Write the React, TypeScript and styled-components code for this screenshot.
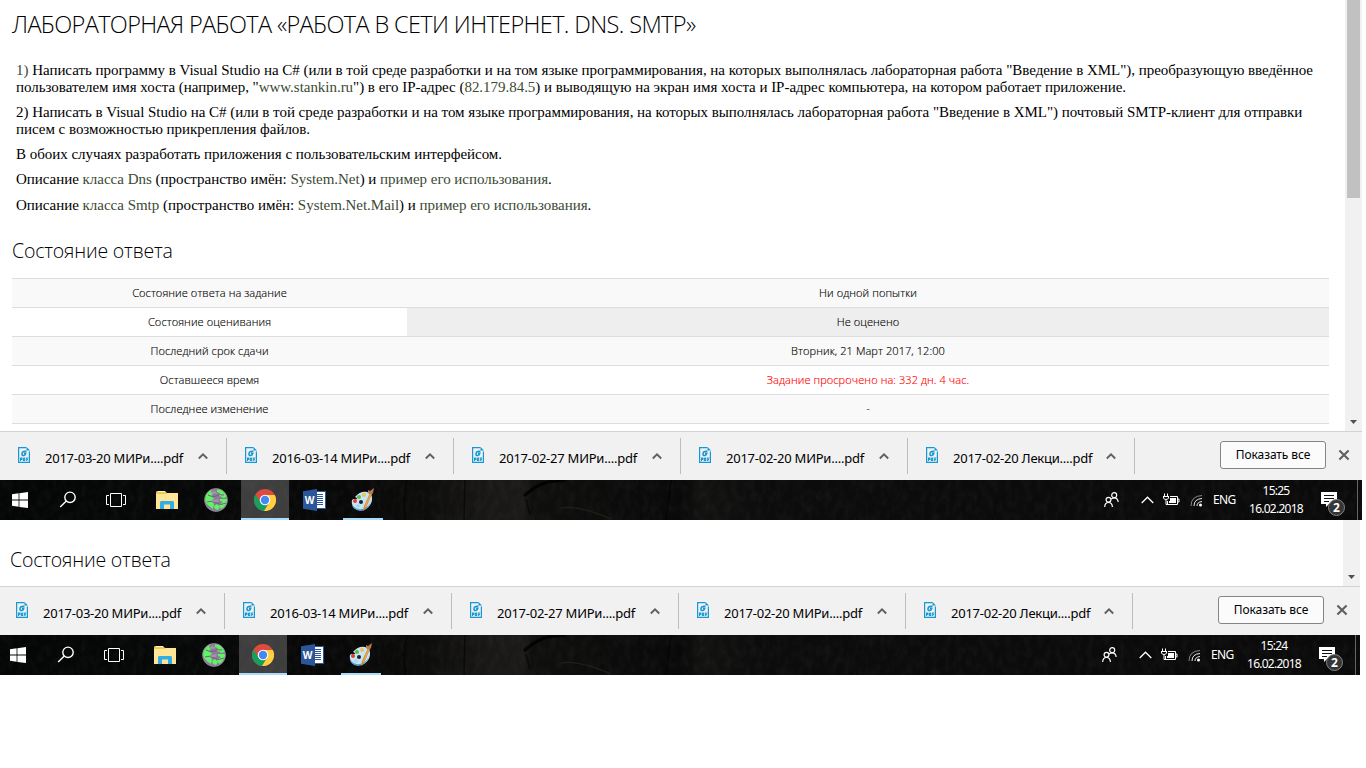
import React from "react";
import styled, { createGlobalStyle } from "styled-components";

const Global = createGlobalStyle`
  * { box-sizing: border-box; }
  html, body { margin: 0; background: #fff; }
  body { width: 1366px; height: 768px; overflow: hidden; }
`;

const Screen = styled.section<{ $w: number; $h: number }>`
  width: ${(p) => p.$w}px;
  height: ${(p) => p.$h}px;
  overflow: hidden;
  display: flex;
  flex-direction: column;
  background: #fff;
`;
const Viewport = styled.div<{ $h: number }>`
  height: ${(p) => p.$h}px;
  display: flex;
  overflow: hidden;
`;
const Article = styled.main<{ $left: number }>`
  flex: 1;
  min-width: 0;
  padding-left: ${(p) => p.$left}px;
  font-family: "Open Sans", sans-serif;
  font-weight: 300;
  color: #000;
`;
const Title = styled.h1`
  margin: 6px 0 0;
  height: 37px;
  font-size: 23.5px;
  line-height: 36px;
  font-weight: 300;
  letter-spacing: -0.63px;
  white-space: nowrap;
`;
const Prose = styled.div`
  padding: 19px 0 0 4px;
  font: 400 15px/17px "Liberation Serif", serif;
`;
const Para = styled.p<{ $gap?: number }>`
  margin: 0 0 ${(p) => p.$gap ?? 8}px;
`;
const Line = styled.span`
  display: block;
  white-space: nowrap;
  letter-spacing: -0.032px;
`;
const Num = styled.span`
  color: #444;
`;
const Link = styled.a`
  color: #3c4a34;
`;
const Heading = styled.h2<{ $top: number }>`
  margin: ${(p) => p.$top}px 0 0;
  height: 30px;
  font-size: 19.5px;
  line-height: 30px;
  font-weight: 300;
  letter-spacing: -0.18px;
  white-space: nowrap;
`;
const Table = styled.div`
  width: 1317px;
  margin-top: 12px;
  border-bottom: 1px solid #ddd;
`;
const Row = styled.div<{ $odd: boolean }>`
  display: grid;
  grid-template-columns: 395px 1fr;
  height: 29px;
  border-top: 1px solid #ddd;
  background: ${(p) => (p.$odd ? "#f9f9f9" : "#fff")};
`;
const Cell = styled.div<{ $red?: boolean; $hover?: boolean }>`
  text-align: center;
  font-size: 11px;
  line-height: 28px;
  letter-spacing: 0.08px;
  -webkit-text-stroke: 0.15px;
  color: ${(p) => (p.$red ? "#f00" : "#000")};
  background: ${(p) => (p.$hover ? "#eee" : "transparent")};
`;
const Scrollbar = styled.div`
  width: 17px;
  background: #f1f1f1;
  display: flex;
  flex-direction: column;
  align-items: center;
  justify-content: space-between;
`;
const Thumb = styled.div<{ $h: number }>`
  width: 13px;
  height: ${(p) => p.$h}px;
  background: #c1c1c1;
`;
const Shelf = styled.div<{ $left: number }>`
  height: 49px;
  flex: none;
  display: flex;
  padding-left: ${(p) => p.$left}px;
  background: #f1f1f1;
  border-top: 1px solid #d3d3d3;
`;
const Download = styled.div<{ $first: boolean }>`
  width: ${(p) => (p.$first ? 210 : 227)}px;
  padding-left: ${(p) => (p.$first ? 0 : 17)}px;
  height: 36px;
  margin-top: 6px;
  display: flex;
  border-right: 1px solid #bdbdbd;
  font: 400 13px/20px "Noto Sans", sans-serif;
  color: #000;
  white-space: nowrap;
`;
const FileIcon = styled.svg`
  width: 14px;
  height: 17px;
  margin-top: 8px;
  flex: none;
`;
const FileName = styled.span`
  width: 140px;
  margin: 10px 0 0 14px;
  letter-spacing: -0.24px;
`;
const Caret = styled.svg`
  margin: 14px 0 0 13px;
  flex: none;
`;
const ShowAll = styled.button`
  width: 106px;
  height: 28px;
  margin: 9px 12px 0 auto;
  padding: 0;
  border: 1px solid #858585;
  border-radius: 3px;
  background: #fbfbfb;
  font: 400 12px/24px "Noto Sans", sans-serif;
  letter-spacing: -0.1px;
  color: #000;
`;
const CloseIcon = styled.svg`
  margin: 17px 12px 0 0;
`;
const Taskbar = styled.div`
  height: 40px;
  flex: none;
  display: grid;
  background: #0a0a0a;
  color: #fff;
  overflow: hidden;
  > * { grid-area: 1 / 1; }
`;
const Items = styled.div<{ $left: number }>`
  display: flex;
  height: 40px;
  margin-left: ${(p) => p.$left}px;
  width: 1362px;
`;
const TaskButton = styled.div<{ $w?: number; $active?: boolean; $ml?: number }>`
  width: ${(p) => p.$w ?? 48}px;
  height: 40px;
  margin-left: ${(p) => p.$ml ?? 0}px;
  flex: none;
  display: flex;
  align-items: center;
  justify-content: center;
  background: ${(p) => (p.$active ? "rgba(255,255,255,.22)" : "transparent")};
`;
const Running = styled(TaskButton)`
  border-bottom: 2px solid #a9dcfa;
  padding-top: 2px;
`;
const Tray = styled.div`
  display: flex;
  margin-left: auto;
  height: 40px;
`;
const TrayIcon = styled.svg<{ $ml?: number; $mt: number }>`
  flex: none;
  margin: ${(p) => p.$mt}px 0 0 ${(p) => p.$ml ?? 0}px;
`;
const Lang = styled.span`
  width: 26px;
  margin-left: 9px;
  font: 400 12px/40px "Noto Sans", sans-serif;
  letter-spacing: -0.6px;
`;
const Clock = styled.div`
  width: 60px;
  margin-left: 7px;
  padding-top: 2px;
  text-align: center;
  font: 400 12px/18px "Noto Sans", sans-serif;
  letter-spacing: -0.75px;
  white-space: nowrap;
`;
const Peek = styled.div`
  width: 5px;
  margin-left: 11px;
  border-left: 1px solid #666;
`;

function Wallpaper({ id }: { id: string }) {
  return (
    <svg width="1362" height="40">
      <defs>
        <linearGradient id={`${id}g`}>
          <stop offset="0" stopColor="#040505" />
          <stop offset=".09" stopColor="#060707" />
          <stop offset=".25" stopColor="#080808" />
          <stop offset=".31" stopColor="#0c0c0b" />
          <stop offset=".36" stopColor="#191817" />
          <stop offset=".385" stopColor="#1a1918" />
          <stop offset=".39" stopColor="#0f0f0e" />
          <stop offset=".5" stopColor="#090909" />
          <stop offset=".515" stopColor="#121211" />
          <stop offset=".56" stopColor="#0c0c0c" />
          <stop offset="1" stopColor="#0b0a0a" />
        </linearGradient>
        <filter id={`${id}n`} x="0" y="0" width="100%" height="100%">
          <feTurbulence type="fractalNoise" baseFrequency=".16 .09" numOctaves="4" seed="8" />
          <feColorMatrix values="0 0 0 0 .45  0 0 0 0 .44  0 0 0 0 .42  .5 0 0 0 -.18" />
        </filter>
      </defs>
      <rect width="1362" height="40" fill={`url(#${id}g)`} />
      <rect width="1362" height="40" filter={`url(#${id}n)`} opacity=".2" />
      <path d="M524 16Q536 5 548 2L566 0" fill="none" stroke="#000" strokeWidth="3" opacity=".8" />
      <path d="M526 19L530 35M407 0Q402 20 406 40M671 0L666 40M465 0L464 40" fill="none" stroke="#000" strokeWidth="1.5" opacity=".55" />
      <path d="M561 28Q578 25 611 39" fill="none" stroke="#231f1a" strokeWidth="1.3" />
    </svg>
  );
}

const WindowsLogo = () => (
  <svg width="16" height="16" viewBox="0 0 16 16" fill="#fff">
    <path d="M0 2.3L6.6 1.3V7.6H0zM7.4 1.2L16 0V7.6H7.4zM0 8.4H6.6V14.7L0 13.8zM7.4 8.4H16V16L7.4 14.9z" />
  </svg>
);
const SearchIcon = () => (
  <svg width="18" height="18" viewBox="0 0 18 18" fill="none" stroke="#fff" strokeWidth="1.4">
    <circle cx="11" cy="6.3" r="5.2" />
    <path d="M7.3 10L1.2 16.1" />
  </svg>
);
const TaskView = () => (
  <svg width="20" height="14" viewBox="0 0 20 14" fill="none" stroke="#fff">
    <path d="M4.5 .5H15.5V13.5H4.5zM3 2.5H.5V11.5H3M17 2.5H19.5V11.5H17" />
  </svg>
);
const Explorer = () => (
  <svg width="22" height="20" viewBox="0 0 22 20">
    <path d="M0 2V19H22V3H11L9 1H1Z" fill="#f3c755" />
    <path d="M0 4H10L12 3H22V19H0Z" fill="#ffe697" />
    <path d="M2 1.5H9" stroke="#fff5cf" />
    <path d="M4 12L5 11H17L18 12V19H14V14.5H8V19H4Z" fill="#33ade5" />
  </svg>
);
const Globe = () => (
  <svg width="24" height="24" viewBox="0 0 24 24">
    <circle cx="12" cy="12" r="11.7" fill="#8b7c98" />
    <path d="M1 9L4 4L8 1L7 4L9 6L7 8L10 10L8 13L10 16L9 21L5 18L2 15L1 12ZM13 1L18 2L21 5L23 9L19 10L18 9L15 8L16 5L13 4ZM16 11L23 11L23 14L20 19L17 21L15 17L19 14L16 13ZM10 18L13 16L16 19L14 22L11 21Z" fill="#62f268" />
    <path d="M4 7Q9 10 12 8T20 7M3 14Q7 12 12 15T22 15" fill="none" stroke="#75637d" strokeWidth="1" />
    <path d="M7 4L11 3L14 5L10 6ZM8 12L15 11L14 14L9 14Z" fill="#a292ab" />
    <circle cx="12" cy="12" r="11.3" fill="none" stroke="#8b8791" opacity=".7" />
  </svg>
);
const Chrome = () => (
  <svg width="22" height="22" viewBox="0 0 22 22">
    <circle cx="11" cy="11" r="11" fill="#dd4b3e" />
    <path d="M1.5 5.5A11 11 0 0 0 10.2 22L15.3 13.5H11L6.7 13.5Z" fill="#16a05d" />
    <path d="M11 6H20.8A11 11 0 0 1 10 22L15.3 13.5Z" fill="#ffce43" />
    <circle cx="11" cy="11" r="5.3" fill="#fff" />
    <circle cx="11" cy="11" r="4.2" fill="#4587f3" />
  </svg>
);
const WordMark = styled.span`
  width: 23px;
  height: 22px;
  display: grid;
  > * { grid-area: 1 / 1; }
`;
const Letter = styled.span`
  z-index: 1;
  width: 14px;
  text-align: center;
  font: 700 10px/22px "Open Sans", sans-serif;
`;
const Word = () => (
  <WordMark>
    <svg width="23" height="22" viewBox="0 0 23 22">
      <path d="M12 2.5H22.5V19.5H12Z" fill="#fff" stroke="#2b579a" />
      <path d="M13 5.5H20M13 7.5H20M13 9.5H20M13 11.5H20M13 13.5H20M13 15.5H20" stroke="#2b579a" />
      <path d="M0 2.2L14 0V22L0 19.8Z" fill="#2b579a" />
    </svg>
    <Letter>W</Letter>
  </WordMark>
);
const Paint = () => (
  <svg width="24" height="24" viewBox="0 0 24 24">
    <path d="M4 9Q9 3 16 4Q22 6 21 12C20 18 16 22 9 22Q2 22 1 16Q0 11 3 11Q6 12 6 10Z" fill="#c5e5f4" />
    <path d="M1 16Q4 22 11 21Q18 20 20 12Q18 23 9 23Q2 22 1 16Z" fill="#579dcb" />
    <circle cx="4" cy="13" r="2" fill="#e33d32" />
    <circle cx="8" cy="9" r="2" fill="#63b847" />
    <circle cx="13" cy="7" r="2" fill="#edc445" />
    <circle cx="10" cy="14" r="2" fill="#17232b" />
    <circle cx="7" cy="18" r="1.8" fill="#a8d5ef" />
    <path d="M19 5L21 6L15 20L12 23L13 18Z" fill="#d98531" />
    <path d="M17 2L19 3L23 0L22 5L20 7L17 5Z" fill="#b77b4e" />
    <path d="M20 6L14 19" stroke="#f8c271" strokeWidth=".7" />
  </svg>
);

const files = [
  "2017-03-20 МИРи....pdf",
  "2016-03-14 МИРи....pdf",
  "2017-02-27 МИРи....pdf",
  "2017-02-20 МИРи....pdf",
  "2017-02-20 Лекци....pdf",
];

function DownloadShelf({ shift }: { shift: number }) {
  return (
    <Shelf $left={17 - shift}>
      {files.map((name, i) => (
        <Download key={name} $first={i === 0}>
          <FileIcon viewBox="0 0 14 17">
            <path d="M9.5 1.6H1.6V16.4H12.4V5.5" fill="none" stroke="#1598d4" strokeWidth="1.2" />
            <path d="M9.5 1L13 4.5H9.5Z" fill="#1598d4" />
            <path d="M9.4 5.4Q5 4.8 5 8Q5 9.9 6.8 9.5Q8.6 9.1 8.8 7.2H7" fill="none" stroke="#1598d4" strokeWidth="1.6" />
            <path d="M3.5 15V12H4.8V13.4H3.5M6.4 12V14.5H7.7V12H6.4M9.7 15V12H11.3M9.7 13.5H11" fill="none" stroke="#1598d4" strokeWidth="1.1" />
          </FileIcon>
          <FileName>{name}</FileName>
          <Caret width="10" height="8" viewBox="0 0 10 8"><path d="M.8 6.5L5 2.3L9.2 6.5" fill="none" stroke="#606060" strokeWidth="1.9" /></Caret>
        </Download>
      ))}
      <ShowAll>Показать все</ShowAll>
      <CloseIcon width="12" height="12" viewBox="0 0 12 12"><path d="M1.4 1.4L10.6 10.6M10.6 1.4L1.4 10.6" stroke="#606060" strokeWidth="2.1" /></CloseIcon>
    </Shelf>
  );
}

const Notice = styled.div`
  width: 26px;
  height: 28px;
  margin: 10px 0 0 14px;
  display: grid;
  > * { grid-area: 1 / 1; }
`;
const Count = styled.span`
  width: 17px;
  height: 17px;
  margin: 9px 0 0 8px;
  border: 1px solid #858585;
  border-radius: 50%;
  background: #363636;
  text-align: center;
  font: 700 12px/15px "Noto Sans", sans-serif;
`;

function WinTaskbar({ shift, time }: { shift: number; time: string }) {
  return (
    <Taskbar>
      <Wallpaper id={`w${shift}`} />
      <Items $left={-shift}>
        <TaskButton $w={40}><WindowsLogo /></TaskButton>
        <TaskButton $ml={4}><SearchIcon /></TaskButton>
        <TaskButton><TaskView /></TaskButton>
        <TaskButton $ml={3}><Explorer /></TaskButton>
        <TaskButton $ml={1}><Globe /></TaskButton>
        <Running $active $ml={1}><Chrome /></Running>
        <TaskButton $ml={1}><Word /></TaskButton>
        <Running $w={40} $ml={5}><Paint /></Running>
        <Tray>
          <TrayIcon $mt={12} width="15" height="16" viewBox="0 0 15 16" fill="none" stroke="#fff" strokeWidth="1.2">
            <circle cx="4.5" cy="7.8" r="2.4" /><circle cx="10.2" cy="3.2" r="2.5" />
            <path d="M.7 15Q.8 10.5 4.5 10.5T8.4 15M7 7.2Q8.3 5.8 10.2 5.8Q13.8 5.8 14.2 10" />
          </TrayIcon>
          <TrayIcon $mt={16} $ml={22} width="13" height="8" viewBox="0 0 13 8" fill="none" stroke="#fff" strokeWidth="1.3"><path d="M.7 7L6.5 1.2L12.3 7" /></TrayIcon>
          <TrayIcon $mt={13} $ml={9} width="17" height="13" viewBox="0 0 17 13" fill="none" stroke="#fff">
            <path d="M1.5 .5V3M4.5 .5V3M0 3.5H6M.5 3V5Q1 6.5 3 6.5T5.5 5V3M3 6.5V11.5H5M7 3.5H14.5V11.5H4.5V8M15 6H16V9H15" />
            <path d="M7 5H13V10H6V8H7Z" fill="#fff" stroke="none" />
          </TrayIcon>
          <TrayIcon $mt={13} $ml={10} width="14" height="15" viewBox="0 0 14 15" fill="none" stroke="#fff">
            <path d="M1 13Q1 3 12 2.5" opacity=".5" /><path d="M4 13Q4 6 12 5.5M7 13Q7 9 12 8.5" opacity=".9" /><circle cx="10.5" cy="12" r="1.5" fill="#fff" stroke="none" />
          </TrayIcon>
          <Lang>ENG</Lang>
          <Clock>{time}<br />16.02.2018</Clock>
          <Notice>
            <svg width="18" height="18" viewBox="0 0 18 18"><path d="M1 2H17V14H9L6 17V14H1Z" fill="#fff" /><path d="M4 5.5H14M4 8.5H14M4 11.5H9" stroke="#111" /></svg>
            <Count>2</Count>
          </Notice>
          <Peek />
        </Tray>
      </Items>
    </Taskbar>
  );
}

const ScrollArrow = () => (
  <svg width="17" height="17" viewBox="0 0 17 17"><path d="M5 6H12L8.5 10Z" fill="#505050" /></svg>
);

const rows = [
  ["Состояние ответа на задание", "Ни одной попытки"],
  ["Состояние оценивания", "Не оценено"],
  ["Последний срок сдачи", "Вторник, 21 Март 2017, 12:00"],
  ["Оставшееся время", "Задание просрочено на: 332 дн. 4 час."],
  ["Последнее изменение", "-"],
];

export default function App() {
  return (
    <>
      <Global />
      <Screen $w={1362} $h={520}>
        <Viewport $h={431}>
          <Article $left={12}>
            <Title>ЛАБОРАТОРНАЯ РАБОТА «РАБОТА В СЕТИ ИНТЕРНЕТ. DNS. SMTP»</Title>
            <Prose>
              <Para>
                <Line><Num>1)</Num> Написать программу в Visual Studio на C# (или в той среде разработки и на том языке программирования, на которых выполнялась лабораторная работа "Введение в XML"), преобразующую введённое</Line>
                <Line>пользователем имя хоста (например, "<Link>www.stankin.ru</Link>") в его IP-адрес (<Link>82.179.84.5</Link>) и выводящую на экран имя хоста и IP-адрес компьютера, на котором работает приложение.</Line>
              </Para>
              <Para>
                <Line>2) Написать в Visual Studio на C# (или в той среде разработки и на том языке программирования, на которых выполнялась лабораторная работа "Введение в XML") почтовый SMTP-клиент для отправки</Line>
                <Line>писем с возможностью прикрепления файлов.</Line>
              </Para>
              <Para><Line>В обоих случаях разработать приложения с пользовательским интерфейсом.</Line></Para>
              <Para $gap={9}><Line>Описание <Link>класса Dns</Link> (пространство имён: <Link>System.Net</Link>) и <Link>пример его использования</Link>.</Line></Para>
              <Para><Line>Описание <Link>класса Smtp</Link> (пространство имён: <Link>System.Net.Mail</Link>) и <Link>пример его использования</Link>.</Line></Para>
            </Prose>
            <Heading $top={22}>Состояние ответа</Heading>
            <Table>
              {rows.map(([k, v], i) => (
                <Row key={k} $odd={i % 2 === 0}>
                  <Cell>{k}</Cell>
                  <Cell $hover={i === 1} $red={i === 3}>{v}</Cell>
                </Row>
              ))}
            </Table>
          </Article>
          <Scrollbar><Thumb $h={198} /><ScrollArrow /></Scrollbar>
        </Viewport>
        <DownloadShelf shift={0} />
        <WinTaskbar shift={0} time="15:25" />
      </Screen>
      <Screen $w={1360} $h={155}>
        <Viewport $h={66}>
          <Article $left={10}><Heading $top={25}>Состояние ответа</Heading></Article>
          <Scrollbar><Thumb $h={0} /><ScrollArrow /></Scrollbar>
        </Viewport>
        <DownloadShelf shift={2} />
        <WinTaskbar shift={2} time="15:24" />
      </Screen>
    </>
  );
}
